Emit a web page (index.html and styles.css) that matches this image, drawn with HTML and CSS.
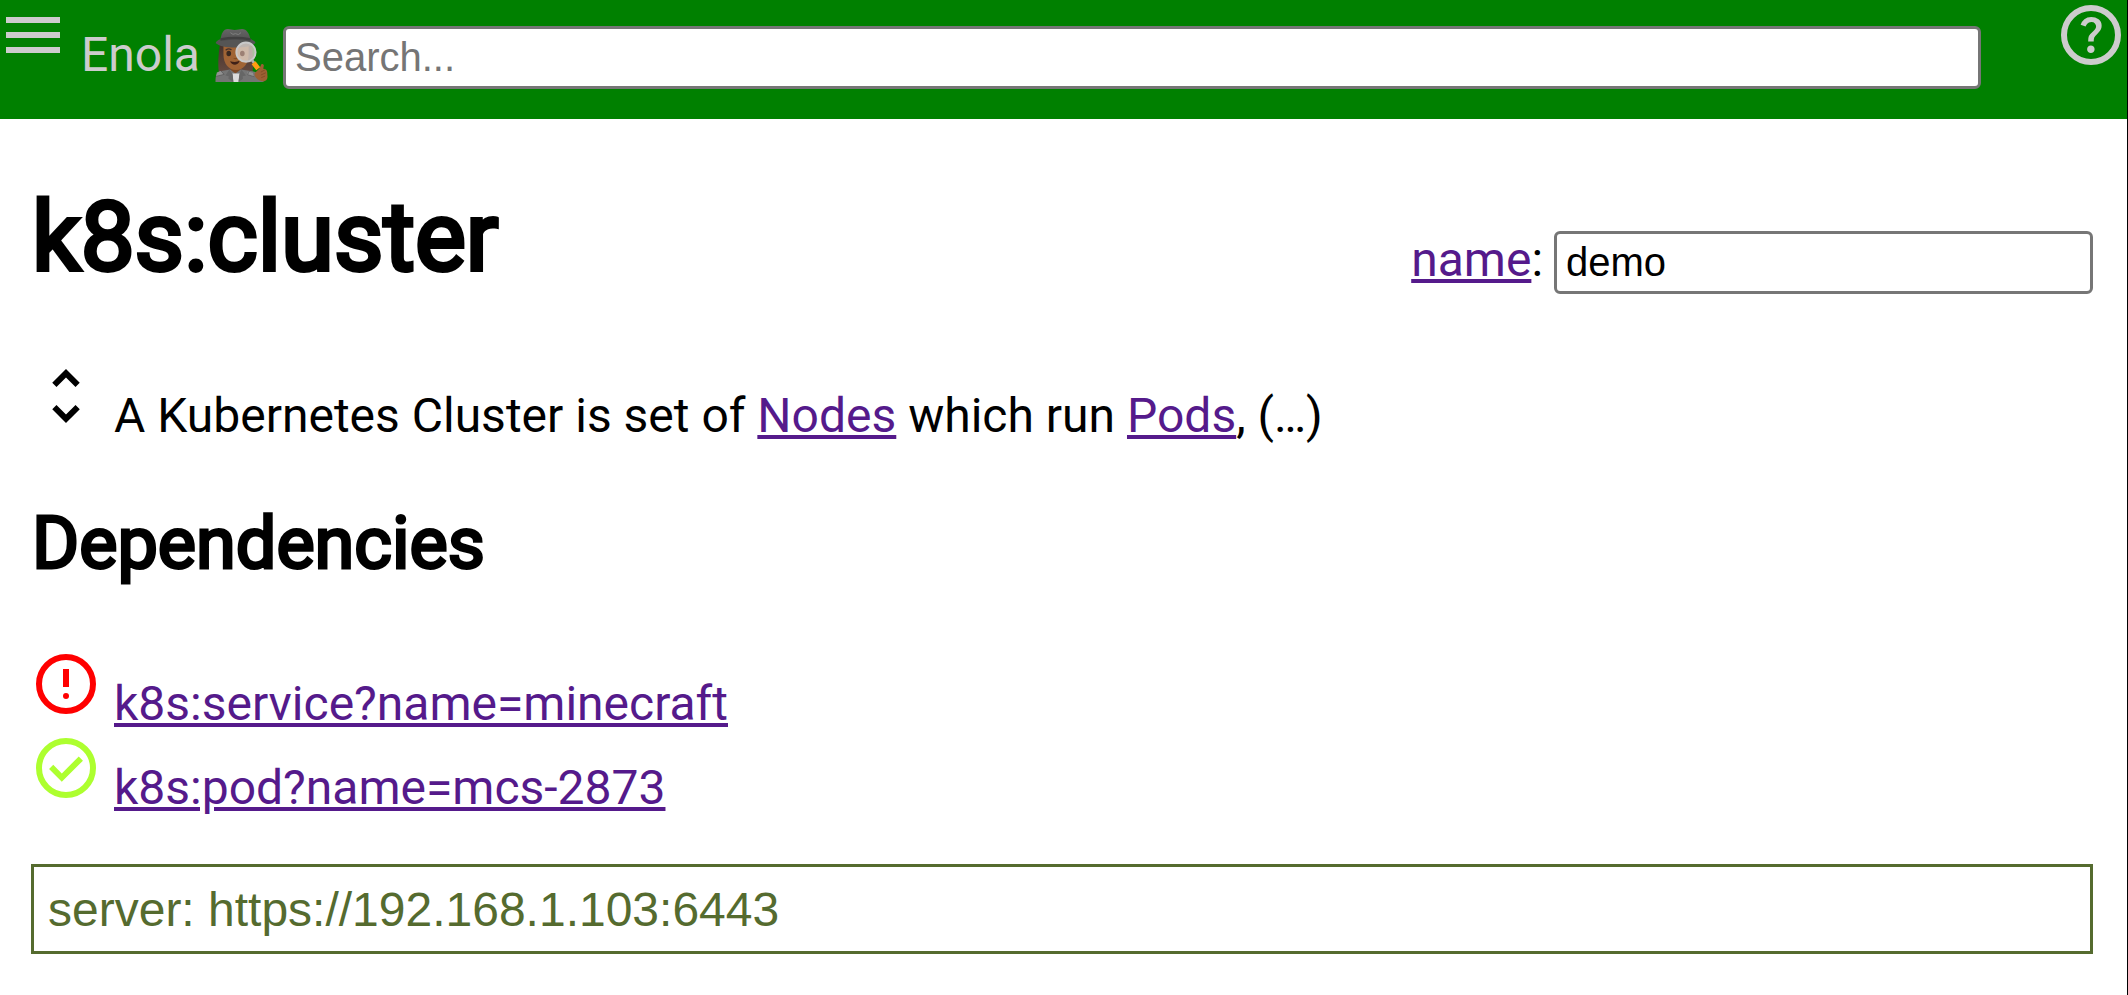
FILE: index.html
```html
<!DOCTYPE html>
<html lang="en">
<head>
<meta charset="utf-8">
<title>Enola</title>
<link rel="stylesheet" href="styles.css">
</head>
<body>
<header class="topbar">
  <button class="icon-button menu" type="button" aria-label="Menu">
    <svg class="menu-icon" viewBox="3 6 18 12"><path d="M3 18h18v-2H3v2zm0-5h18v-2H3v2zm0-7v2h18V6H3z"/></svg>
  </button>
  <a class="brand" href="#">Enola
    <svg class="detective" viewBox="45 38 159 160" aria-hidden="true">
      <defs>
        <linearGradient id="hat" x1="0" y1="0" x2="0" y2="1"><stop offset="0" stop-color="#666"/><stop offset="1" stop-color="#484848"/></linearGradient>
        <linearGradient id="hair" x1="0" y1="0" x2="0" y2="1"><stop offset="0" stop-color="#43302a"/><stop offset="1" stop-color="#644a40"/></linearGradient>
      </defs>
      <path fill="url(#hair)" d="M60 80c-6 35-7 65-4 90h102c3-30 2-60-4-90z"/>
      <path fill="#7d4a26" d="M93 148h28v32H93z"/>
      <path fill="#a06435" d="M70 82h76v33c0 28-16 47-38 47s-38-19-38-47z"/>
      <path fill="#757575" d="M46 198c0-23 5-33 22-34l22-4 16 12 16-12 26 4c19 3 43 8 43 34z"/>
      <path fill="#dcdcdc" d="M97 172h22l-3 26h-16z"/>
      <path fill="#666" d="M88 160l-12 18 10 3-1 7 15 10-2-22zM124 160l14 18-10 3 1 7-14 10 3-22z"/>
      <path fill="#929292" d="M50 169l12-4 9 10-23 6zM143 166l16 4 3 12-19-6z"/>
      <path fill="none" stroke="#555" stroke-width="2" d="M48 181l24-6-10-11M163 182l-20-6 5-11"/>
      <path fill="none" stroke="#43302a" stroke-width="4" stroke-linecap="round" d="M78 101q7-5 15-1"/>
      <ellipse cx="86" cy="112" rx="7" ry="8" fill="#38281f"/>
      <path fill="#78451f" d="M99 126h15q-7 6-15 0z"/>
      <path fill="#3f2118" d="M90 135q16 5 29-1-3 11-14 12-11-1-15-11z"/>
      <path fill="url(#hat)" d="M61 72c2-20 9-34 22-34 9 0 13 3 21 3s14-3 22-3c14 0 23 14 26 34l-4 15H66z"/>
      <path fill="#555" d="M47 81c-1-5 7-10 15-13-1 6 1 6 7 6 27-5 48-5 75 0 5 0 8-1 8-6 8 4 16 8 14 13-11 9-30 13-59 13-31 0-48-4-60-13z"/>
      <path fill="#404040" d="M61 66q45-9 91 0v7q-45-8-91 0z"/>
      <path fill="none" stroke="#808080" stroke-width="3" d="M91 49q8 9 15 3 10 7 17-3"/>
      <circle cx="138" cy="108" r="29" fill="#dcd2cc" fill-opacity=".78" stroke="#c9c9c9" stroke-width="6"/>
      <ellipse cx="127" cy="112" rx="7" ry="8" fill="#9c8074"/>
      <path stroke="#b0b0b0" stroke-width="8" d="M156 132l7 9"/>
      <path fill="#9c6033" d="M168 168l10-10 7-14q5-2 7 4l-2 10q10 0 12 10l1 15c0 9-7 14-15 13-12-2-20-9-23-16-2-6-1-9 3-12z"/>
      <path stroke="#ff9d12" stroke-width="15" d="M161 140l14 18"/>
      <path fill="none" stroke="#774520" stroke-width="2" d="M183 168l13-7M183 177l15-7M184 185l12-5"/>
    </svg>
  </a>
  <input class="field search" type="text" placeholder="Search..." aria-label="Search">
  <button class="icon-button help" type="button" aria-label="Help">
    <svg class="help-icon" viewBox="2 2 20 20"><circle cx="12" cy="12" r="9" fill="none" stroke="currentColor" stroke-width="2"/><path d="M11.950 18Q12.475 18 12.838 17.638Q13.200 17.275 13.200 16.750Q13.200 16.225 12.838 15.863Q12.475 15.500 11.950 15.500Q11.425 15.500 11.063 15.863Q10.700 16.225 10.700 16.750Q10.700 17.275 11.063 17.638Q11.425 18 11.950 18ZM11.050 14.150H12.900Q12.900 13.325 13.088 12.850Q13.275 12.375 14.150 11.550Q14.800 10.900 15.175 10.313Q15.550 9.725 15.550 8.900Q15.550 7.500 14.525 6.750Q13.500 6 12.100 6Q10.675 6 9.788 6.750Q8.900 7.500 8.550 8.550L10.200 9.200Q10.325 8.750 10.763 8.225Q11.200 7.700 12.100 7.700Q12.900 7.700 13.300 8.138Q13.700 8.575 13.700 9.100Q13.700 9.600 13.400 10.038Q13.100 10.475 12.650 10.850Q11.550 11.825 11.300 12.325Q11.050 12.825 11.050 14.150Z"/></svg>
  </button>
</header>
<main class="content">
  <div class="title-row">
    <h1 class="title">k8s:cluster</h1>
    <div class="name-group">
      <label for="name"><a href="#name">name</a>:</label>
      <input class="field name-field" id="name" type="text" value="demo">
    </div>
  </div>
  <div class="row summary">
    <svg class="icon" viewBox="0 0 24 24"><path d="M12 5.830L15.170 9l1.410-1.410L12 3 7.410 7.590 8.830 9 12 5.830zm0 12.340L8.830 15l-1.410 1.410L12 21l4.590-4.590L15.170 15 12 18.170z"/></svg>
    <p class="text">A Kubernetes Cluster is set of <a href="#nodes">Nodes</a> which run <a href="#pods">Pods</a>, (…)</p>
  </div>
  <h2 class="subtitle">Dependencies</h2>
  <ul class="list">
    <li class="row">
      <svg class="icon error" viewBox="0 0 24 24"><circle cx="12" cy="12" r="9" fill="none" stroke="currentColor" stroke-width="2"/><path d="M11 7h2v6h-2z"/><circle cx="12" cy="16" r="1"/></svg>
      <a href="#service">k8s:service?name=minecraft</a>
    </li>
    <li class="row">
      <svg class="icon ok" viewBox="0 0 24 24"><circle cx="12" cy="12" r="9" fill="none" stroke="currentColor" stroke-width="2"/><path d="M10.600 16.600L17.650 9.550 16.250 8.150 10.600 13.800 7.750 10.950 6.350 12.350z"/></svg>
      <a href="#pod">k8s:pod?name=mcs-2873</a>
    </li>
  </ul>
  <div class="server">server: https://192.168.1.103:6443</div>
</main>
</body>
</html>
```
FILE: styles.css
```css
* { box-sizing: border-box; }
body {
  margin: 0;
  min-height: 100vh;
  border-right: 1px solid #000;
  background: #fff;
  color: #000;
  font: 48px/56px Roboto, sans-serif;
}
a { color: #551a8b; text-decoration: underline; }
svg { fill: currentColor; display: block; flex: none; }
.topbar {
  display: flex;
  align-items: flex-start;
  background: #008000;
  color: #ccc;
  padding: 5px 6px 30px;
}
.icon-button { border: 0; padding: 0; background: none; color: inherit; }
.menu { padding-top: 12px; }
.menu-icon { width: 54px; height: 36px; }
.brand {
  display: flex;
  align-items: center;
  gap: 15px;
  margin: 22px 15px 0 21px;
  color: inherit;
  text-decoration: none;
}
.detective { width: 53px; height: 53px; }
.field {
  height: 63px;
  border: 3px solid #767676;
  border-radius: 6px;
  padding: 0 9px;
  background: #fff;
  color: #000;
  font: 40px/46px "Liberation Sans", sans-serif;
}
.field::placeholder { color: #757575; }
.search { flex: 1; min-width: 0; margin: 21px 80px 0 0; }
.help-icon { width: 60px; height: 60px; }
.content { padding: 62px 34px 40px 31px; }
.title-row { display: flex; justify-content: space-between; align-items: flex-end; }
.title, .subtitle, .text, .list { margin: 0; padding: 0; }
.title { padding: 0 0 1px 1px; font-size: 96px; line-height: 112px; font-weight: 400; -webkit-text-stroke: 4px #000; }
.name-group { display: flex; align-items: baseline; gap: 11px; }
.name-field { width: 539px; }
.row { display: flex; align-items: baseline; gap: 12px; height: 84px; margin-left: -1px; }
.summary { margin-top: 66px; }
.icon { width: 72px; height: 72px; }
.subtitle { margin: 58px 0 62px; padding-left: 1px; font-size: 72px; line-height: 84px; font-weight: 400; -webkit-text-stroke: 3px #000; }
.list { list-style: none; }
.error { color: #f00; }
.ok { color: #adff2f; }
.server {
  margin-top: 48px;
  border: 3px solid #556b2f;
  padding: 16px 14px 14px;
  color: #556b2f;
  font: 48px/54px "Liberation Sans", sans-serif;
}
```
